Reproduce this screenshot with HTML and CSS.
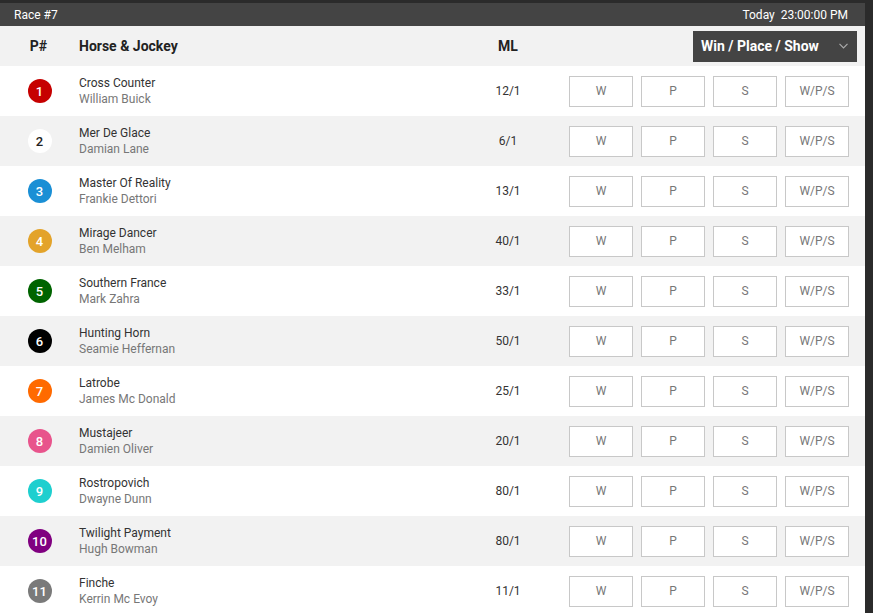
FILE: index.html
```html
<!DOCTYPE html>
<html>
<head>
<meta charset="utf-8">
<link rel="stylesheet" href="styles.css">
</head>
<body>
<div class="page">
  <div class="topbar">
    <span class="race">Race #7</span>
    <span class="time">Today&nbsp;&nbsp;23:00:00 PM</span>
  </div>
  <div class="head">
    <div class="pos">P#</div>
    <div class="names">Horse &amp; Jockey</div>
    <div class="ml">ML</div>
    <div class="select">
      <span>Win / Place / Show</span>
      <svg class="chev" width="9" height="6" viewBox="0 0 9 6"><path d="M0.5 0.8 L4.5 4.8 L8.5 0.8" fill="none" stroke="#aaa" stroke-width="1.2"/></svg>
    </div>
  </div>
  <div class="rows">
    <div class="row"><div class="pos"><span class="num c1">1</span></div><div class="names"><div class="horse">Cross Counter</div><div class="jockey">William Buick</div></div><div class="ml">12/1</div><div class="bets"><span class="bet">W</span><span class="bet">P</span><span class="bet">S</span><span class="bet">W/P/S</span></div></div>
    <div class="row"><div class="pos"><span class="num c2">2</span></div><div class="names"><div class="horse">Mer De Glace</div><div class="jockey">Damian Lane</div></div><div class="ml">6/1</div><div class="bets"><span class="bet">W</span><span class="bet">P</span><span class="bet">S</span><span class="bet">W/P/S</span></div></div>
    <div class="row"><div class="pos"><span class="num c3">3</span></div><div class="names"><div class="horse">Master Of Reality</div><div class="jockey">Frankie Dettori</div></div><div class="ml">13/1</div><div class="bets"><span class="bet">W</span><span class="bet">P</span><span class="bet">S</span><span class="bet">W/P/S</span></div></div>
    <div class="row"><div class="pos"><span class="num c4">4</span></div><div class="names"><div class="horse">Mirage Dancer</div><div class="jockey">Ben Melham</div></div><div class="ml">40/1</div><div class="bets"><span class="bet">W</span><span class="bet">P</span><span class="bet">S</span><span class="bet">W/P/S</span></div></div>
    <div class="row"><div class="pos"><span class="num c5">5</span></div><div class="names"><div class="horse">Southern France</div><div class="jockey">Mark Zahra</div></div><div class="ml">33/1</div><div class="bets"><span class="bet">W</span><span class="bet">P</span><span class="bet">S</span><span class="bet">W/P/S</span></div></div>
    <div class="row"><div class="pos"><span class="num c6">6</span></div><div class="names"><div class="horse">Hunting Horn</div><div class="jockey">Seamie Heffernan</div></div><div class="ml">50/1</div><div class="bets"><span class="bet">W</span><span class="bet">P</span><span class="bet">S</span><span class="bet">W/P/S</span></div></div>
    <div class="row"><div class="pos"><span class="num c7">7</span></div><div class="names"><div class="horse">Latrobe</div><div class="jockey">James Mc Donald</div></div><div class="ml">25/1</div><div class="bets"><span class="bet">W</span><span class="bet">P</span><span class="bet">S</span><span class="bet">W/P/S</span></div></div>
    <div class="row"><div class="pos"><span class="num c8">8</span></div><div class="names"><div class="horse">Mustajeer</div><div class="jockey">Damien Oliver</div></div><div class="ml">20/1</div><div class="bets"><span class="bet">W</span><span class="bet">P</span><span class="bet">S</span><span class="bet">W/P/S</span></div></div>
    <div class="row"><div class="pos"><span class="num c9">9</span></div><div class="names"><div class="horse">Rostropovich</div><div class="jockey">Dwayne Dunn</div></div><div class="ml">80/1</div><div class="bets"><span class="bet">W</span><span class="bet">P</span><span class="bet">S</span><span class="bet">W/P/S</span></div></div>
    <div class="row"><div class="pos"><span class="num c10">10</span></div><div class="names"><div class="horse">Twilight Payment</div><div class="jockey">Hugh Bowman</div></div><div class="ml">80/1</div><div class="bets"><span class="bet">W</span><span class="bet">P</span><span class="bet">S</span><span class="bet">W/P/S</span></div></div>
    <div class="row"><div class="pos"><span class="num c11">11</span></div><div class="names"><div class="horse">Finche</div><div class="jockey">Kerrin Mc Evoy</div></div><div class="ml">11/1</div><div class="bets"><span class="bet">W</span><span class="bet">P</span><span class="bet">S</span><span class="bet">W/P/S</span></div></div>
  </div>
</div>
</body>
</html>
```
FILE: styles.css
```css
html, body {
  margin: 0;
  padding: 0;
  background: #2b2b2b;
  overflow: hidden;
}
body {
  font-family: Roboto, "Liberation Sans", sans-serif;
  width: 873px;
  height: 613px;
}
.page {
  width: 865px;
  background: #fff;
  height: 613px;
  overflow: hidden;
}
.topbar {
  height: 23px;
  border-top: 3px solid #2b2b2b;
  background: #444444;
  color: #fff;
  font-size: 12px;
  display: flex;
  align-items: center;
  justify-content: space-between;
  padding: 0 17px 0 14px;
}
.head {
  height: 40px;
  background: #f2f2f2;
  display: flex;
  align-items: center;
  font-weight: 700;
  font-size: 14px;
  color: #222;
  padding-right: 8px;
}
.pos {
  width: 79px;
  flex: none;
  box-sizing: border-box;
  display: flex;
  justify-content: center;
  padding-left: 2px;
  padding-right: 2px;
}
.head .pos { padding-left: 0; padding-right: 2px; }
.names {
  width: 399px;
  flex: none;
}
.ml {
  width: 60px;
  flex: none;
  text-align: center;
  margin-right: 31px;
}
.head .ml { margin-right: 0; }
.select {
  margin-left: auto;
  width: 164px;
  height: 31px;
  background: #444;
  color: #fff;
  display: flex;
  align-items: center;
  justify-content: space-between;
  box-sizing: border-box;
  padding: 0 9px 0 8px;
  font-size: 14px;
  font-weight: 700;
}
.row {
  height: 50px;
  display: flex;
  align-items: center;
  padding-right: 16px;
  background: #fff;
}
.row:nth-child(even) { background: #f2f2f2; }
.num {
  width: 24px;
  height: 24px;
  border-radius: 50%;
  color: #fff;
  font-size: 13px;
  font-weight: 500;
  display: flex;
  align-items: center;
  justify-content: center;
}
.c1 { background: #c60000; }
.c2 { background: #fff; color: #222; }
.c3 { background: #1a8fd5; }
.c4 { background: #e3a32a; }
.c5 { background: #006400; }
.c6 { background: #000; }
.c7 { background: #ff6a00; }
.c8 { background: #e8548c; }
.c9 { background: #1ecfcf; }
.c10 { background: #800080; }
.c11 { background: #7a7a7a; }
.horse {
  font-size: 12px;
  line-height: 16px;
  color: #333;
}
.jockey {
  font-size: 12px;
  line-height: 16px;
  color: #777;
}
.row .ml {
  font-size: 12px;
  color: #333;
}
.bets {
  display: flex;
  gap: 8px;
  margin-left: auto;
}
.bet {
  width: 64px;
  height: 31px;
  box-sizing: border-box;
  border: 1px solid #c8c8c8;
  background: #fff;
  color: #777;
  font-size: 12px;
  display: flex;
  align-items: center;
  justify-content: center;
}
```
